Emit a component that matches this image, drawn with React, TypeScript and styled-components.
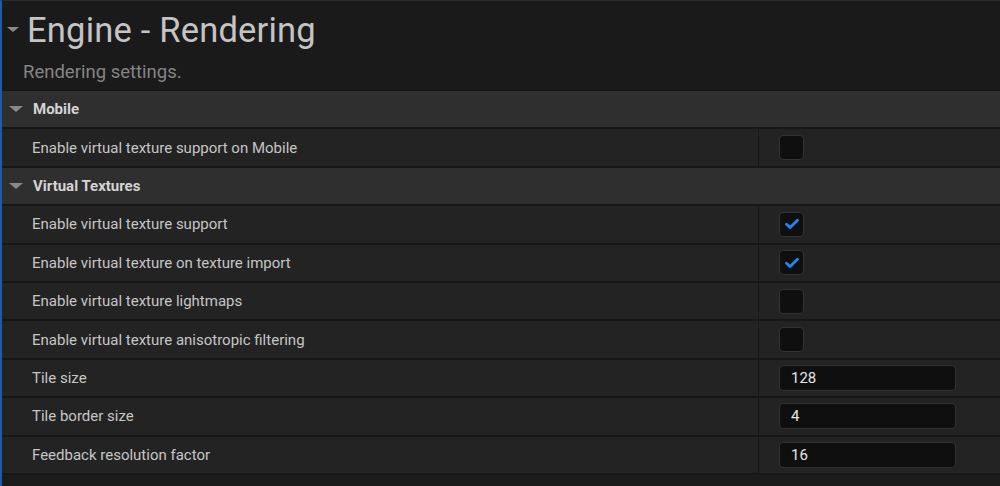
import React from "react";
import styled, { createGlobalStyle } from "styled-components";

const Global = createGlobalStyle`
  html, body { margin: 0; padding: 0; background: #1a1a1a; }
  body { font-family: Roboto, "Noto Sans", sans-serif; }
  * { box-sizing: border-box; }
`;

const Panel = styled.div`
  width: 1000px;
  height: 486px;
  overflow: hidden;
  background: #1a1a1a;
  border-left: 2px solid #1b5cab;
  border-top: 1px solid #2b2b2b;
  display: flex;
  flex-direction: column;
`;

const Header = styled.div`
  height: 90px;
  flex: none;
  padding-left: 5px;
  display: flex;
  flex-direction: column;
  border-bottom: 1px solid #151515;
`;

const TitleRow = styled.div`
  display: flex;
  align-items: center;
  height: 53px;
  padding-top: 4px;
`;

const Title = styled.h1`
  margin: 0 0 0 8px;
  font-weight: 400;
  font-size: 34.5px;
  color: #c4c4c4;
  letter-spacing: 0.2px;
`;

const Subtitle = styled.div`
  margin: 7px 0 0 16px;
  font-size: 18.5px;
  color: #858585;
`;

const Arrow = styled.span<{ $size?: number }>`
  width: 0;
  height: 0;
  border-left: ${(p) => (p.$size ?? 7)}px solid transparent;
  border-right: ${(p) => (p.$size ?? 7)}px solid transparent;
  border-top: ${(p) => ((p.$size ?? 7) * 0.9).toFixed(1)}px solid #8a8a8a;
  flex: none;
`;

const Category = styled.div`
  height: 38.4px;
  flex: none;
  background: #2f2f2f;
  border-bottom: 2px solid #171717;
  display: flex;
  align-items: center;
  padding-left: 7px;
  gap: 10px;
  font-weight: 700;
  font-size: 15px;
  color: #d4d4d4;
`;

const Row = styled.div`
  height: 38.4px;
  flex: none;
  background: #232323;
  border-bottom: 2px solid #171717;
  display: grid;
  grid-template-columns: 757px 1fr;
`;

const Label = styled.div`
  display: flex;
  align-items: center;
  padding-left: 30px;
  font-size: 15px;
  color: #c6c6c6;
  border-right: 1px solid #181818;
`;

const Value = styled.div`
  display: flex;
  align-items: center;
  padding-left: 20px;
`;

const Check = styled.div`
  width: 25px;
  height: 25px;
  border-radius: 4px;
  background: #0f0f0f;
  border: 1px solid #333333;
  display: flex;
  align-items: center;
  justify-content: center;
`;

const NumInput = styled.div`
  width: 177px;
  height: 26px;
  border-radius: 4px;
  background: #0f0f0f;
  border: 1px solid #313131;
  display: flex;
  align-items: center;
  padding-left: 11px;
  font-size: 15px;
  color: #e6e6e6;
`;

const Footer = styled.div`
  flex: 1;
  background: #1b1b1b;
`;

const Tick = () => (
  <svg width="14" height="12" viewBox="0 0 14 12">
    <path d="M1.5 6.2 L5.2 9.6 L12.5 2.3" fill="none" stroke="#1f86f0" strokeWidth="2.8" strokeLinecap="round" strokeLinejoin="round" />
  </svg>
);

type Item =
  | { kind: "cat"; label: string }
  | { kind: "bool"; label: string; checked: boolean }
  | { kind: "num"; label: string; value: string };

const items: Item[] = [
  { kind: "cat", label: "Mobile" },
  { kind: "bool", label: "Enable virtual texture support on Mobile", checked: false },
  { kind: "cat", label: "Virtual Textures" },
  { kind: "bool", label: "Enable virtual texture support", checked: true },
  { kind: "bool", label: "Enable virtual texture on texture import", checked: true },
  { kind: "bool", label: "Enable virtual texture lightmaps", checked: false },
  { kind: "bool", label: "Enable virtual texture anisotropic filtering", checked: false },
  { kind: "num", label: "Tile size", value: "128" },
  { kind: "num", label: "Tile border size", value: "4" },
  { kind: "num", label: "Feedback resolution factor", value: "16" },
];

export default function App() {
  return (
    <>
      <Global />
      <Panel>
        <Header>
          <TitleRow>
            <Arrow $size={6.5} />
            <Title>Engine - Rendering</Title>
          </TitleRow>
          <Subtitle>Rendering settings.</Subtitle>
        </Header>
        {items.map((it, i) =>
          it.kind === "cat" ? (
            <Category key={i}>
              <Arrow $size={7} />
              {it.label}
            </Category>
          ) : (
            <Row key={i}>
              <Label>{it.label}</Label>
              <Value>
                {it.kind === "bool" ? (
                  <Check>{it.checked && <Tick />}</Check>
                ) : (
                  <NumInput>{it.value}</NumInput>
                )}
              </Value>
            </Row>
          )
        )}
        <Footer />
      </Panel>
    </>
  );
}
